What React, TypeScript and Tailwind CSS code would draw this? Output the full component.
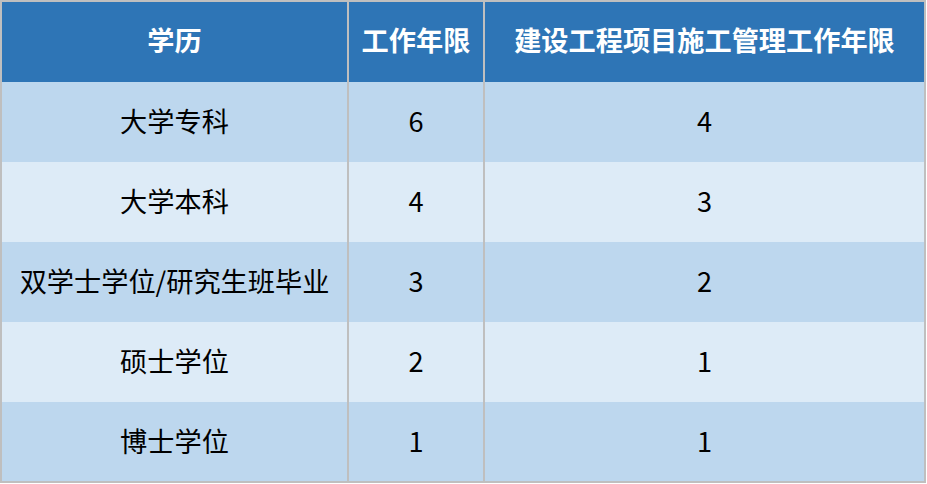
import React from "react";

const rows: [string, string, string][] = [
  ["大学专科", "6", "4"],
  ["大学本科", "4", "3"],
  ["双学士学位/研究生班毕业", "3", "2"],
  ["硕士学位", "2", "1"],
  ["博士学位", "1", "1"],
];

export default function App() {
  return (
    <div
      className="w-[927px] h-[484px] bg-white"
      style={{ fontFamily: '"Noto Sans CJK SC", "Noto Sans", sans-serif' }}
    >
      <div className="w-[926px] border-2 border-[#bfbfbf] flex flex-col">
        <div className="grid grid-cols-[345px_134px_439px] gap-x-[2px] bg-[#bfbfbf] h-[80px]">
          {["学历", "工作年限", "建设工程项目施工管理工作年限"].map((t) => (
            <div
              key={t}
              className="bg-[#2e75b6] flex items-center justify-center text-white font-bold text-[27.2px] leading-none pb-[4px]"
            >
              {t}
            </div>
          ))}
        </div>
        {rows.map((r, i) => (
          <div
            key={i}
            className={`grid grid-cols-[345px_134px_439px] gap-x-[2px] bg-[#bfbfbf] ${
              i === 4 ? "h-[79px]" : "h-[80px]"
            }`}
          >
            {r.map((t, j) => (
              <div
                key={j}
                className={`${
                  i % 2 === 0 ? "bg-[#bdd7ee]" : "bg-[#ddebf7]"
                } flex items-center justify-center text-black text-[27.2px] leading-none pb-[2px]`}
              >
                {t}
              </div>
            ))}
          </div>
        ))}
      </div>
    </div>
  );
}
